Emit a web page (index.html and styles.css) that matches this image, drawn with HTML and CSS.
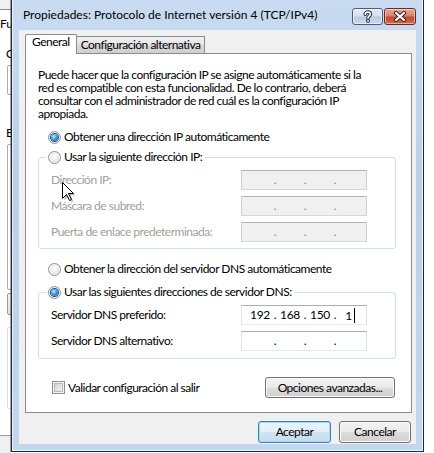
FILE: index.html
```html
<!DOCTYPE html>
<html>
<head>
<meta charset="utf-8">
<link rel="stylesheet" href="styles.css">
</head>
<body>

<div class="screen">

    <div class="behind">
        <div class="behind-top"></div>
        <div class="behind-tab">Fu</div>
        <div class="behind-label">C</div>
        <div class="behind-box box-text"></div>
        <div class="behind-label label-e">E</div>
        <div class="behind-box box-list"></div>
        <div class="behind-box box-btn"></div>
        <div class="behind-box box-desc"></div>
        <div class="behind-bottom"></div>
    </div>

    <div class="dialog">
        <div class="titlebar">
            <span class="title">Propiedades: Protocolo de Internet versión 4 (TCP/IPv4)</span>
            <div class="caption-buttons">
                <button class="cap help">
                    <svg width="10" height="13" viewBox="0 0 10 13">
                        <path d="M2.3 4.2 C2.3 1.4 7.4 1.4 7.4 4.2 C7.4 6 5 6 5 8.2" fill="none" stroke="#2b3440" stroke-width="3.6" stroke-linecap="round"/>
                        <circle cx="5" cy="10.9" r="1.9" fill="#2b3440"/>
                        <path d="M2.3 4.2 C2.3 1.4 7.4 1.4 7.4 4.2 C7.4 6 5 6 5 8.2" fill="none" stroke="#fff" stroke-width="1.6" stroke-linecap="round"/>
                        <circle cx="5" cy="10.9" r="0.9" fill="#fff"/>
                    </svg>
                </button>
                <button class="cap close">
                    <svg width="14" height="11" viewBox="0 0 14 11">
                        <path d="M3 2 L11 9 M11 2 L3 9" stroke="#3a2520" stroke-width="4.2" stroke-linecap="round"/>
                        <path d="M3 2 L11 9 M11 2 L3 9" stroke="#fff" stroke-width="2.2" stroke-linecap="round"/>
                    </svg>
                </button>
            </div>
        </div>

        <div class="client">
            <div class="tabs">
                <div class="tab active">General</div>
                <div class="tab">Configuración alternativa</div>
            </div>

            <div class="panel">
                <p class="intro">Puede hacer que la configuración IP se asigne automáticamente si la<br>red es compatible con esta funcionalidad. De lo contrario, deberá<br>consultar con el administrador de red cuál es la configuración IP<br>apropiada.</p>

                <div class="option first"><span class="radio checked"></span>Obtener una dirección IP automáticamente</div>

                <fieldset class="group">
                    <legend class="option"><span class="radio"></span>Usar la siguiente dirección IP:</legend>
                    <div class="field-row disabled">
                        <span>Dirección IP:</span>
                        <div class="ip"><span class="seg"></span><span class="dot">.</span><span class="seg"></span><span class="dot">.</span><span class="seg"></span><span class="dot">.</span><span class="seg"></span></div>
                    </div>
                    <div class="field-row disabled">
                        <span>Máscara de subred:</span>
                        <div class="ip"><span class="seg"></span><span class="dot">.</span><span class="seg"></span><span class="dot">.</span><span class="seg"></span><span class="dot">.</span><span class="seg"></span></div>
                    </div>
                    <div class="field-row disabled">
                        <span>Puerta de enlace predeterminada:</span>
                        <div class="ip"><span class="seg"></span><span class="dot">.</span><span class="seg"></span><span class="dot">.</span><span class="seg"></span><span class="dot">.</span><span class="seg"></span></div>
                    </div>
                </fieldset>

                <div class="option dns-auto"><span class="radio"></span>Obtener la dirección del servidor DNS automáticamente</div>

                <fieldset class="group dns">
                    <legend class="option"><span class="radio checked"></span>Usar las siguientes direcciones de servidor DNS:</legend>
                    <div class="field-row">
                        <span>Servidor DNS preferido:</span>
                        <div class="ip"><span class="seg">192</span><span class="dot">.</span><span class="seg">168</span><span class="dot">.</span><span class="seg">150</span><span class="dot">.</span><span class="seg">1<i class="caret"></i></span></div>
                    </div>
                    <div class="field-row">
                        <span>Servidor DNS alternativo:</span>
                        <div class="ip"><span class="seg"></span><span class="dot">.</span><span class="seg"></span><span class="dot">.</span><span class="seg"></span><span class="dot">.</span><span class="seg"></span></div>
                    </div>
                </fieldset>

                <div class="panel-footer">
                    <div class="check-row"><span class="checkbox"></span>Validar configuración al salir</div>
                    <button class="btn advanced">Opciones avanzadas...</button>
                </div>
            </div>

            <div class="dialog-buttons">
                <button class="btn default">Aceptar</button>
                <button class="btn">Cancelar</button>
            </div>
        </div>
    </div>

    <svg class="pointer" width="16" height="22" viewBox="0 0 16 22">
        <path d="M2.5 2.5 L2.5 18.5 L6.5 14.5 L9.5 20.5 L11.5 19.5 L8.5 13.5 L13.5 13.5 Z" fill="rgba(0,0,0,0.25)"/>
        <path d="M0.5 0.5 L0.5 16.5 L4.5 12.5 L7.5 18.5 L9.5 17.5 L6.5 11.5 L11.5 11.5 Z" fill="#fff" stroke="#000" stroke-width="1" stroke-linejoin="miter"/>
    </svg>

</div>

</body>
</html>
```

FILE: styles.css
```css
* {
    box-sizing: border-box;
}

body {
    margin: 0;
    width: 434px;
    height: 453px;
    overflow: hidden;
    background-color: #fff;
    font-family: Lato, "Liberation Sans", sans-serif;
    font-size: 12px;
    line-height: 14px;
    color: #000;
}

.screen {
    position: relative;
    display: flex;
    align-items: flex-start;
    height: 453px;
}

/* window lying behind the dialog */
.behind {
    width: 11px;
    height: 453px;
    flex-shrink: 0;
    overflow: hidden;
    display: flex;
    flex-direction: column;
    background-color: #fff;
}

.behind-top {
    height: 10px;
    flex-shrink: 0;
    background-color: #f0f0f0;
    border-bottom: 1px solid #898c95;
}

.behind-tab {
    margin-top: 7px;
    white-space: nowrap;
}

.behind-label {
    margin: 16px 0 0 6px;
}

.label-e {
    margin-top: 31px;
}

.behind-box {
    flex-shrink: 0;
    margin-left: 7px;
    width: 30px;
    border: 1px solid #abadb3;
    border-radius: 2px;
}

.box-text {
    margin-top: 4px;
    height: 30px;
}

.box-list {
    margin-top: 4px;
    height: 146px;
}

.box-btn {
    margin-top: 3px;
    height: 22px;
    border-color: #9a9a9a;
    background: linear-gradient(#f4f4f4, #e0e0e0);
}

.box-desc {
    margin-top: 12px;
    height: 82px;
    border-color: #d5dfe5;
}

.behind-bottom {
    margin-top: 26px;
    flex: 1;
    background-color: #f0f0f0;
    border-top: 1px solid #a0a0a0;
}

/* dialog frame */
.dialog {
    width: 413px;
    height: 452px;
    flex-shrink: 0;
    display: flex;
    flex-direction: column;
    padding: 0 7px 7px 7px;
    background: linear-gradient(#c8dbf1, #bad0ea 40%, #c3d7ee);
    border: 1px solid #1e2936;
    border-top: none;
    box-shadow: -1px 0 0 rgba(0, 0, 0, 0.35),
        inset 1px 0 0 rgba(255, 255, 255, 0.7),
        inset -1px 0 0 rgba(255, 255, 255, 0.7),
        inset 0 -1px 0 rgba(255, 255, 255, 0.7);
}

.titlebar {
    height: 30px;
    flex-shrink: 0;
    display: flex;
    justify-content: space-between;
    align-items: flex-start;
    padding-left: 4px;
}

.title {
    padding-top: 8px;
    white-space: nowrap;
}

.caption-buttons {
    display: flex;
    gap: 1px;
    margin-top: 8px;
}

.cap {
    height: 17px;
    padding: 0;
    display: flex;
    align-items: center;
    justify-content: center;
    border: 1px solid #4f5e72;
    border-radius: 3px;
    box-shadow: inset 0 0 0 1px rgba(255, 255, 255, 0.45);
}

.cap.help {
    width: 31px;
    background: linear-gradient(#e4ecf6 0, #d2deec 48%, #b8cbe0 52%, #c9daee 100%);
}

.cap.close {
    width: 32px;
    border-color: #6b2b1e;
    background: linear-gradient(#e9a898 0, #d9806b 48%, #c4492f 52%, #d2694b 100%);
}

.client {
    flex: 1;
    display: flex;
    flex-direction: column;
    padding: 4px 4px 0 6px;
    background-color: #f0f0f0;
    letter-spacing: -0.5px;
}

/* tabs */
.tabs {
    display: flex;
    align-items: flex-end;
    height: 19px;
    position: relative;
    z-index: 1;
}

.tab {
    height: 17px;
    padding: 1px 4px 0 4px;
    border: 1px solid #898c95;
    border-bottom: none;
    border-left: none;
    background: linear-gradient(#f2f2f2, #e3e3e3 50%, #dadada 50%, #cfcfcf);
    white-space: nowrap;
}

.tab.active {
    height: 20px;
    margin-bottom: -1px;
    padding: 0 6px;
    border-left: 1px solid #898c95;
    border-radius: 2px 2px 0 0;
    background: #fff;
}

.panel {
    height: 360px;
    flex-shrink: 0;
    display: flex;
    flex-direction: column;
    background-color: #fff;
    border: 1px solid #898c95;
}

.intro {
    margin: 14px 0 0 12px;
    line-height: 13px;
    white-space: nowrap;
}

.option {
    display: flex;
    align-items: center;
    gap: 3px;
    height: 14px;
    white-space: nowrap;
}

.option.first {
    margin: 10px 0 0 22px;
}

.option.dns-auto {
    margin: 13px 0 0 22px;
}

.radio {
    width: 13px;
    height: 13px;
    flex-shrink: 0;
    display: flex;
    align-items: center;
    justify-content: center;
    border: 1px solid #8e8f8f;
    border-radius: 50%;
    background: radial-gradient(circle at 50% 40%, #fdfdfd 0, #e9e9e9 55%, #d0d0d0 100%);
    box-shadow: inset 0 0 0 1px #f7f7f7;
}

.radio.checked::after {
    content: "";
    width: 7px;
    height: 7px;
    border-radius: 50%;
    background: radial-gradient(circle at 40% 35%, #c2ecff 0, #4aa6e4 40%, #0d5aa5 100%);
    box-shadow: 0 0 0 1px #1f4f80;
}

/* group boxes */
.group {
    margin: 6px 0 0 12px;
    width: 358px;
    padding: 6px 28px 6px 12px;
    border: 1px solid #d5dfe5;
    border-radius: 3px;
}

.group.dns {
    margin-top: 9px;
    padding-bottom: 7px;
}

.group legend {
    margin-left: -5px;
    padding: 0 3px 0 2px;
}

.field-row {
    display: grid;
    grid-template-columns: 190px 126px;
    align-items: center;
    white-space: nowrap;
}

.field-row + .field-row {
    margin-top: 6px;
}

.ip {
    height: 20px;
    display: flex;
    align-items: center;
    padding-left: 5px;
    background-color: #fff;
    border: 1px solid;
    border-color: #abadb3 #dbdfe6 #e3e9ef #e2e3ea;
    letter-spacing: -0.3px;
}

.ip .seg {
    width: 26px;
    text-align: center;
}

.ip .dot {
    width: 4px;
    text-align: center;
}

.caret {
    display: inline-block;
    width: 1px;
    height: 15px;
    margin-left: 2px;
    vertical-align: -3px;
    background-color: #000;
}

.disabled {
    color: #a0a0a0;
}

.disabled .ip {
    background-color: #f0f0f0;
    border-color: #b5b5b5 #d0d0d0 #d8d8d8 #d0d0d0;
}

.disabled .dot {
    color: #8a8a8a;
}

/* footer of the tab */
.panel-footer {
    margin: 18px 16px 0 26px;
    display: flex;
    justify-content: space-between;
    align-items: center;
    height: 21px;
}

.check-row {
    display: flex;
    align-items: center;
    gap: 3px;
    white-space: nowrap;
}

.checkbox {
    width: 13px;
    height: 13px;
    border: 1px solid #8e8f8f;
    background: linear-gradient(135deg, #cfcfcf, #f7f7f7);
    box-shadow: inset 0 0 0 1px #f4f4f4, inset 0 0 0 2px #b4b8bc;
}

/* buttons */
.btn {
    height: 21px;
    padding: 0;
    font: inherit;
    letter-spacing: inherit;
    color: #000;
    border: 1px solid #707070;
    border-radius: 3px;
    background: linear-gradient(#f2f2f2 0, #ebebeb 48%, #dddddd 52%, #cfcfcf 100%);
    box-shadow: inset 0 0 0 1px #fbfbfb;
}

.btn.advanced {
    width: 130px;
}

.dialog-buttons {
    display: flex;
    justify-content: flex-end;
    gap: 8px;
    margin: 8px 1px 0 0;
}

.dialog-buttons .btn {
    width: 72px;
    height: 22px;
}

.dialog-buttons .btn.default {
    width: 73px;
    border-color: #3c7fb1;
    background: linear-gradient(#edf5fc 0, #e2eef9 48%, #d2e4f3 52%, #c5dbee 100%);
    box-shadow: inset 0 0 0 1px #9fdcf9;
}

/* mouse pointer over the dialog */
.pointer {
    position: absolute;
    left: 62px;
    top: 182px;
}
```
